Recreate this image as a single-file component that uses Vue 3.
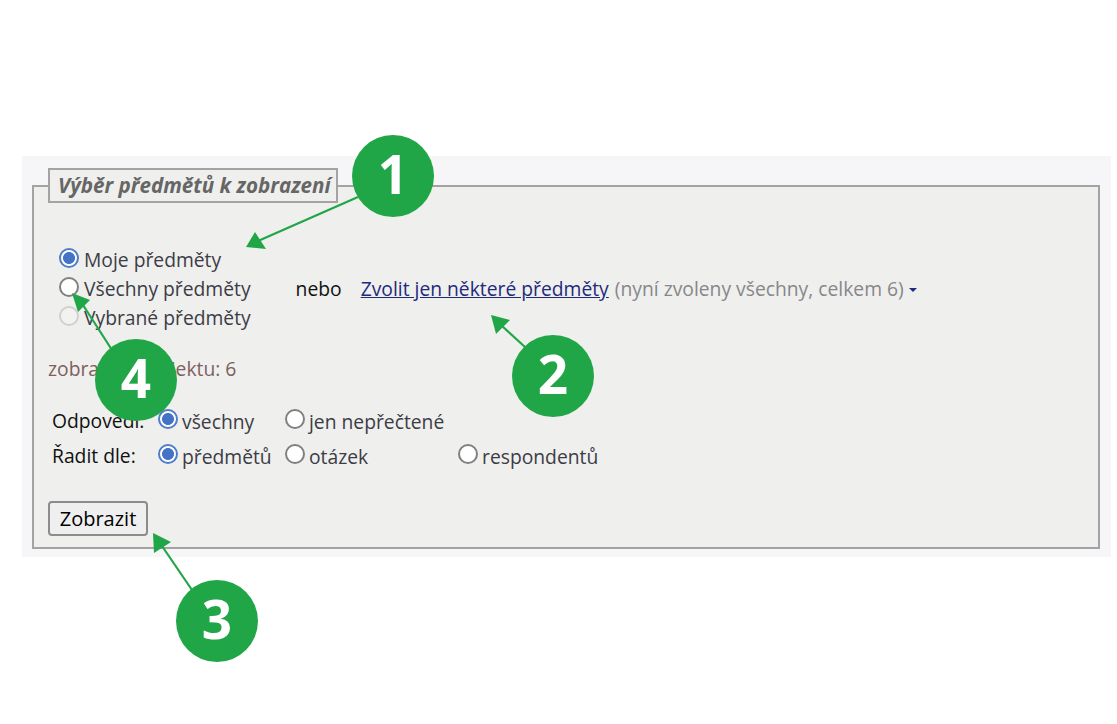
<script setup>
const badges = [
	{ n: 1, x: 393, y: 176 },
	{ n: 2, x: 553, y: 376 },
	{ n: 3, x: 217, y: 621 },
	{ n: 4, x: 136, y: 380 },
];

// line start, line end, arrow head
const arrows = [
	{ x1: 358, y1: 197, x2: 258, y2: 241, head: "246,247 255,232 266,249" },
	{ x1: 525, y1: 347, x2: 502, y2: 326, head: "491,315 510,320 496,334" },
	{ x1: 192, y1: 590, x2: 162, y2: 546, head: "153,533 171,542 154,553" },
	{ x1: 112, y1: 350, x2: 83, y2: 305, head: "72,293 90,300 78,312" },
];
</script>

<template>
	<div class="page">
		<div class="panel">
			<fieldset class="box">
				<legend>Výběr předmětů k zobrazení</legend>

				<div class="choices">
					<label class="choice">
						<input type="radio" name="scope" checked />
						<span>Moje předměty</span>
					</label>
					<div class="choice-row">
						<label class="choice">
							<input type="radio" name="scope" />
							<span>Všechny předměty</span>
						</label>
						<span class="nebo">nebo</span>
						<a class="link" href="#">Zvolit jen některé předměty</a>
						<span class="note">(nyní zvoleny všechny, celkem 6)</span>
						<span class="caret"></span>
					</div>
					<label class="choice">
						<input type="radio" name="scope" disabled />
						<span>Vybrané předměty</span>
					</label>
				</div>

				<p class="count">zobrazeno objektu: 6</p>

				<div class="options">
					<span class="opt-label">Odpovědi:</span>
					<label class="choice"><input type="radio" name="answers" checked /><span>všechny</span></label>
					<label class="choice"><input type="radio" name="answers" /><span>jen nepřečtené</span></label>
					<span></span>

					<span class="opt-label">Řadit dle:</span>
					<label class="choice"><input type="radio" name="sort" checked /><span>předmětů</span></label>
					<label class="choice"><input type="radio" name="sort" /><span>otázek</span></label>
					<label class="choice"><input type="radio" name="sort" /><span>respondentů</span></label>
				</div>

				<button class="submit" type="button">Zobrazit</button>
			</fieldset>
		</div>

		<svg class="arrows" width="1117" height="724">
			<g v-for="a in arrows" :key="a.head">
				<line :x1="a.x1" :y1="a.y1" :x2="a.x2" :y2="a.y2" stroke="#21a647" stroke-width="2.2" />
				<polygon :points="a.head" fill="#21a647" />
			</g>
		</svg>
		<div
			v-for="b in badges"
			:key="b.n"
			class="badge"
			:style="{ left: b.x - 41 + 'px', top: b.y - 41 + 'px' }"
		>{{ b.n }}</div>
	</div>
</template>

<style scoped>
.page {
	position: relative;
	width: 1117px;
	height: 724px;
	padding: 156px 6px 0 22px;
	box-sizing: border-box;
	overflow: hidden;
	background: #fff;
	font-family: "Open Sans", sans-serif;
	font-size: 19.3px;
	color: #3c3c46;
}

.panel {
	height: 401px;
	padding: 12px 11px 0 10px;
	box-sizing: border-box;
	background: #f6f6f8;
}

.box {
	position: relative;
	height: 381px;
	margin: 0;
	padding: 0 14px;
	box-sizing: border-box;
	border: 2px solid #a3a3a3;
	background: #efefed;
}

legend {
	box-sizing: border-box;
	height: 35px;
	margin: 0;
	padding: 0 5px 0 8px;
	border: 2px solid #a3a3a3;
	background: #efefed;
	font-size: 20.6px;
	font-weight: 700;
	font-style: italic;
	line-height: 31px;
	color: #666;
}

.choices {
	display: flex;
	flex-direction: column;
	padding: 42px 0 0 11px;
}

.choice {
	display: flex;
	align-items: flex-start;
	height: 29px;
	line-height: 30px;
}

.choice-row {
	display: flex;
	align-items: flex-start;
	height: 29px;
	line-height: 29px;
}

.choice-row .choice {
	line-height: 29px;
}

input {
	appearance: none;
	flex: none;
	width: 20px;
	height: 20px;
	margin: 3px 5px 0 0;
	border: 2px solid #808080;
	border-radius: 50%;
	background: #fff;
}

input:checked {
	border-color: #4f7dca;
	background: radial-gradient(circle, #4472c4 0 5.6px, #fff 6.3px);
}

input:disabled {
	border-color: #d0d0d0;
	background: #f2f2f0;
}

.nebo {
	margin-left: 45px;
	color: #111;
}

.link {
	margin-left: 19px;
	color: #1f2a7c;
}

.note {
	margin-left: 6px;
	color: #87878b;
}

.caret {
	align-self: center;
	margin: 3px 0 0 5px;
	border-top: 4.5px solid #1f2a7c;
	border-left: 4.5px solid transparent;
	border-right: 4.5px solid transparent;
}

.count {
	margin: 24px 0 0;
	line-height: 26px;
	color: #7d5f5f;
}

.options {
	display: grid;
	grid-template-columns: 106px 127px 173px auto;
	grid-auto-rows: 35px;
	padding: 23px 0 0 4px;
}

.opt-label {
	line-height: 31px;
	color: #111;
}

.options .choice {
	line-height: 33px;
}

.options input {
	margin: 4px 4px 0 0;
}

.submit {
	display: block;
	width: 100px;
	height: 35px;
	margin-top: 26px;
	padding: 0;
	border: 2px solid #8c8c8c;
	border-radius: 4px;
	background: #efefef;
	font-family: "Open Sans", sans-serif;
	font-size: 20px;
	color: #000;
}

.arrows {
	position: absolute;
	left: 0;
	top: 0;
	pointer-events: none;
}

.badge {
	position: absolute;
	display: flex;
	align-items: center;
	justify-content: center;
	width: 82px;
	height: 82px;
	padding-bottom: 5px;
	box-sizing: border-box;
	border-radius: 50%;
	background: #21a647;
	font-size: 53px;
	font-weight: 700;
	color: #fff;
}
</style>
